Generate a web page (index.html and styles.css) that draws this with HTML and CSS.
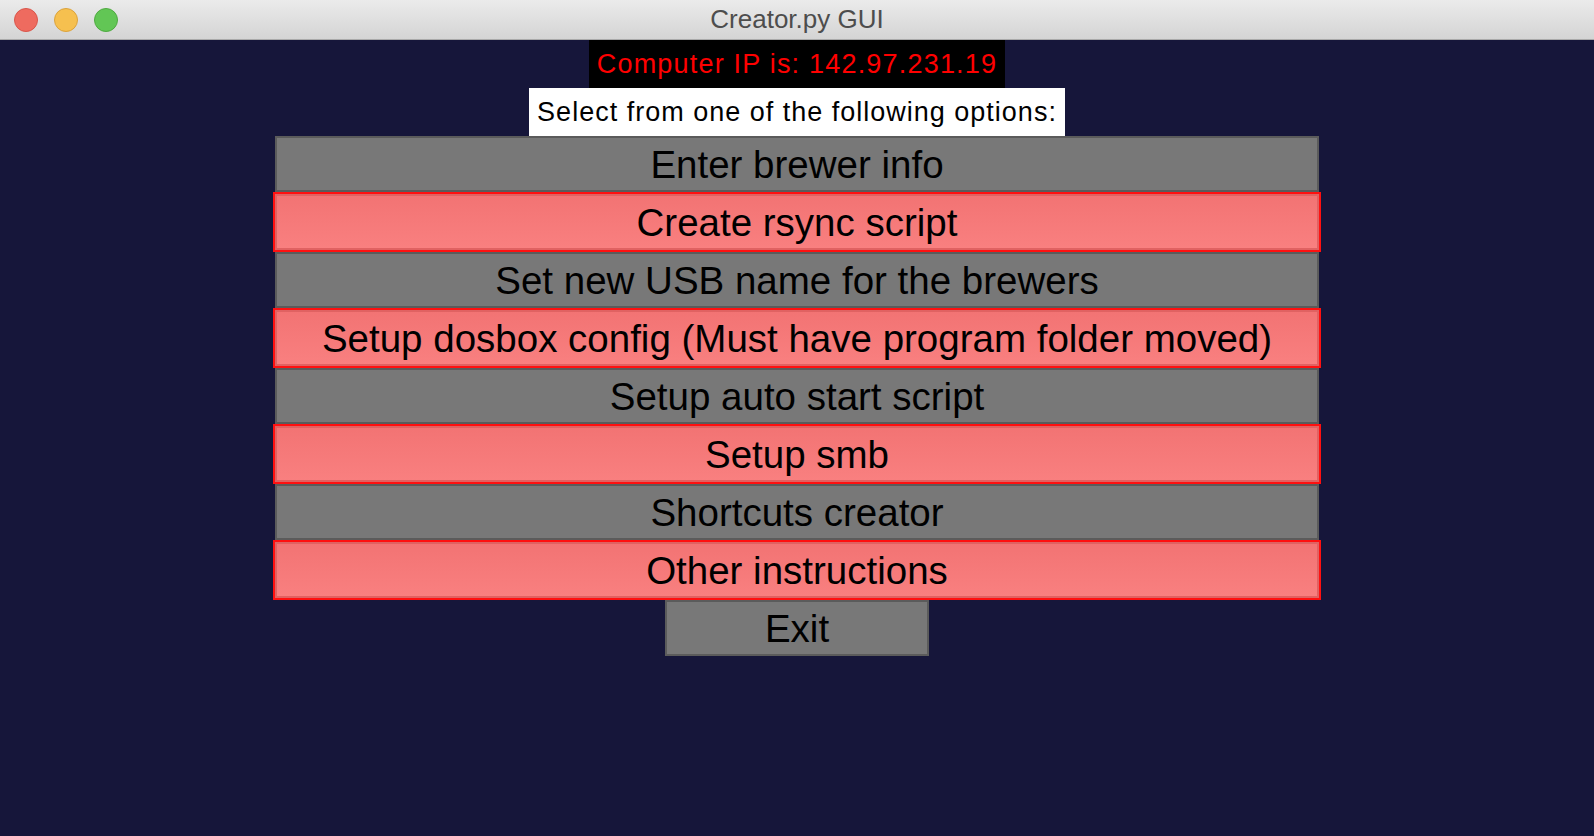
FILE: index.html
```html
<!DOCTYPE html>
<html lang="en">
<head>
<meta charset="utf-8">
<title>Creator.py GUI</title>
<link rel="stylesheet" href="styles.css">
</head>
<body>
<div class="window">
  <header class="titlebar">
    <div class="lights">
      <span class="light close"></span>
      <span class="light minimize"></span>
      <span class="light zoom"></span>
    </div>
    <div class="title">Creator.py GUI</div>
    <div class="spacer"></div>
  </header>
  <main class="content">
    <div class="ip-label">Computer IP is: 142.97.231.19</div>
    <div class="prompt">Select from one of the following options:</div>
    <div class="menu">
      <button class="btn">Enter brewer info</button>
      <button class="btn alt">Create rsync script</button>
      <button class="btn">Set new USB name for the brewers</button>
      <button class="btn alt">Setup dosbox config (Must have program folder moved)</button>
      <button class="btn">Setup auto start script</button>
      <button class="btn alt">Setup smb</button>
      <button class="btn">Shortcuts creator</button>
      <button class="btn alt">Other instructions</button>
      <button class="btn exit">Exit</button>
    </div>
  </main>
</div>
</body>
</html>
```
FILE: styles.css
```css
html, body {
  margin: 0;
  padding: 0;
  height: 100%;
}

body {
  background: #16163a;
  font-family: "Liberation Sans", Arial, sans-serif;
}

.window {
  display: flex;
  flex-direction: column;
  min-height: 100%;
}

.titlebar {
  height: 39px;
  display: grid;
  grid-template-columns: 1fr auto 1fr;
  align-items: center;
  background: linear-gradient(#ebebeb, #d4d4d4);
  border-bottom: 1px solid #a9a9a9;
}

.lights {
  display: flex;
  gap: 16px;
  padding-left: 14px;
}

.light {
  width: 24px;
  height: 24px;
  border-radius: 50%;
  box-sizing: border-box;
}

.close { background: #ee6b5f; border: 1px solid #d9564b; }
.minimize { background: #f6c04f; border: 1px solid #dba33d; }
.zoom { background: #62c655; border: 1px solid #4faa41; }

.title {
  font-family: "Liberation Sans", Arial, sans-serif;
  font-size: 26px;
  color: #4d4d4d;
  padding-bottom: 1px;
}

.content {
  display: flex;
  flex-direction: column;
  align-items: center;
  flex: 1;
}

.ip-label {
  background: #000;
  color: #ff0000;
  font-size: 27px;
  letter-spacing: 1.2px;
  height: 48px;
  line-height: 48px;
  padding: 0 8px;
}

.prompt {
  background: #fff;
  color: #000;
  font-size: 27px;
  letter-spacing: 1px;
  height: 48px;
  line-height: 48px;
  padding: 0 8px;
}

.menu {
  display: flex;
  flex-direction: column;
  align-items: center;
}

.btn {
  box-sizing: border-box;
  width: 1044px;
  height: 56px;
  margin: 0;
  padding: 0;
  border: 2px solid #5b5b5b;
  background: #787878;
  color: #000;
  font-family: "Liberation Sans", Arial, sans-serif;
  font-size: 38.5px;
  line-height: 54px;
  text-align: center;
  cursor: pointer;
}

.btn.alt {
  width: 1048px;
  height: 60px;
  border: 2px solid #ff1010;
  background: linear-gradient(#f27373, #f98080);
  box-shadow: inset 0 0 0 2px #e06262;
  line-height: 58px;
}

.btn.exit {
  width: 264px;
}
```
